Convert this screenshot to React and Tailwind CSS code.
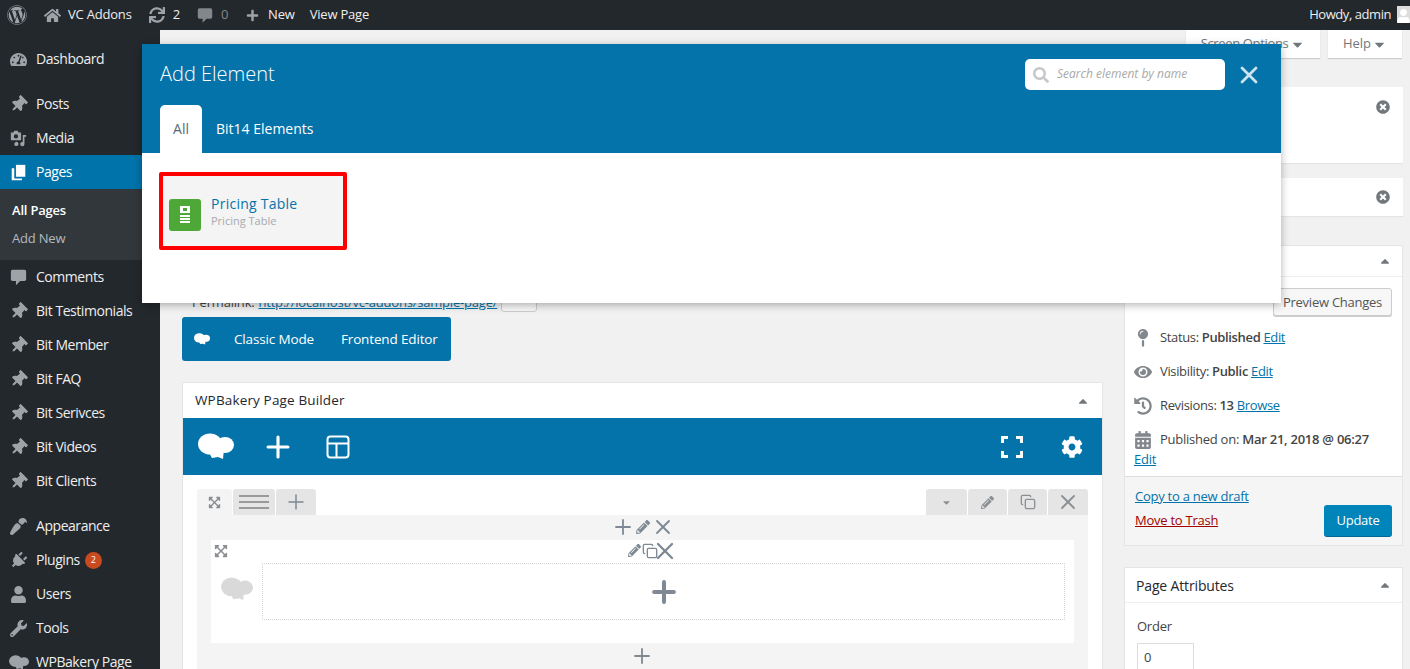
import React from "react";
import { FaWordpress, FaHome, FaSync, FaPlus, FaTachometerAlt, FaThumbtack, FaPaintBrush, FaPlug, FaUser, FaWrench, FaMapPin, FaEye, FaHistory, FaCalendarAlt, FaTimesCircle, FaExpandArrowsAlt, FaPencilAlt, FaCog, FaSearch, FaCaretDown, FaCaretUp } from "react-icons/fa";
import { Copy, X, Plus } from "lucide-react";

const Cloud = ({ className }) => (
  <svg viewBox="0 0 36 27" className={className} fill="currentColor">
    <ellipse cx="12" cy="11" rx="12" ry="10.500" />
    <ellipse cx="27" cy="12" rx="9" ry="8" />
    <path d="M10 18 L26 16 L25 26 L20 24 L14 25 Z" />
  </svg>
);

const Pages = ({ className }) => (
  <svg viewBox="0 0 20 20" className={className} fill="currentColor">
    <path d="M7 1h11v14H7z" />
    <path d="M2 5h3v12h9v2H2z" />
  </svg>
);

const Media = ({ className }) => (
  <svg viewBox="0 0 20 20" className={className} fill="currentColor">
    <path fillRule="evenodd" d="M1 3h3l1-2h4l1 2h3v9H1zM7 5a2.500 2.500 0 1 0 0 5 2.500 2.500 0 0 0 0-5z" />
    <path d="M15 6h4v2h-2v8.500a2.500 2.500 0 1 1-2-2.400z" />
    <path d="M7 14a2.500 2.500 0 1 1-2 2.400 2.500 2.500 0 0 1 2-2.400z" />
  </svg>
);

const Bubble = ({ className }) => (
  <svg viewBox="0 0 20 20" className={className} fill="currentColor">
    <path d="M3 1h14a2 2 0 0 1 2 2v9a2 2 0 0 1-2 2h-5l-5 5v-5H3a2 2 0 0 1-2-2V3a2 2 0 0 1 2-2z" />
  </svg>
);

const Focus = ({ className }) => (
  <svg viewBox="0 0 22 22" className={className} fill="none" stroke="currentColor" strokeWidth="3">
    <path d="M1.500 7V1.500H7M15 1.500h5.500V7M20.500 15v5.500H15M7 20.500H1.500V15" />
  </svg>
);

const Layout = ({ className }) => (
  <svg viewBox="0 0 24 24" className={className} fill="none" stroke="currentColor" strokeWidth="2">
    <rect x="1.500" y="1.500" width="21" height="21" rx="3" />
    <path d="M1.500 8.500h21M10.500 8.500v14" />
  </svg>
);

const Pin = ({ className }) => <FaThumbtack className={`${className} rotate-45`} />;
const Brush = ({ className }) => <FaPaintBrush className={`${className} rotate-180`} />;
const Plug = ({ className }) => <FaPlug className={`${className} rotate-45`} />;

function Item({ icon: Icon, label, active, badge, iconClass = "w-[17px] h-[17px]" }) {
  return (
    <div className={`flex h-[34px] items-center ${active ? "bg-[#0073aa] text-white" : "text-[#eeeeee]"}`}>
      <div className={`flex w-[36px] justify-center pl-[1px] ${active ? "text-white" : "text-[#9ea3a8]"}`}>
        <Icon className={iconClass} />
      </div>
      <span className="pb-[2px] text-[14px] tracking-[-0.45px] whitespace-nowrap">{label}</span>
      {badge && (
        <span className="ml-[5px] flex h-[17px] w-[17px] items-center justify-center rounded-full bg-[#ca4a1f] text-[9px] text-white">{badge}</span>
      )}
    </div>
  );
}

function Sidebar() {
  return (
    <aside className="h-[639px] w-[160px] shrink-0 overflow-hidden bg-[#23282d] pt-[12px]">
      <Item icon={FaTachometerAlt} label="Dashboard" />
      <div className="h-[11px]" />
      <Item icon={Pin} label="Posts" />
      <Item icon={Media} label="Media" />
      <Item icon={Pages} label="Pages" active />
      <div className="bg-[#32373c] pt-[8px] pb-[7px] text-[13px] tracking-[-0.2px]">
        <div className="flex h-[28px] items-center pl-[12px] font-semibold text-white">All Pages</div>
        <div className="flex h-[28px] items-center pl-[12px] text-[#b4b9be]">Add New</div>
      </div>
      <Item icon={Bubble} label="Comments" />
      <Item icon={Pin} label="Bit Testimonials" />
      <Item icon={Pin} label="Bit Member" />
      <Item icon={Pin} label="Bit FAQ" />
      <Item icon={Pin} label="Bit Serivces" />
      <Item icon={Pin} label="Bit Videos" />
      <Item icon={Pin} label="Bit Clients" />
      <div className="h-[11px]" />
      <Item icon={Brush} label="Appearance" />
      <Item icon={Plug} label="Plugins" badge="2" />
      <Item icon={FaUser} label="Users" />
      <Item icon={FaWrench} label="Tools" />
      <Item icon={Cloud} label="WPBakery Page" iconClass="w-[20px] h-[15px]" />
    </aside>
  );
}

function TopBar() {
  return (
    <header className="flex h-[30px] items-center bg-[#23282d] text-[13px] tracking-[-0.2px] text-[#eeeeee]">
      <FaWordpress className="ml-[7px] h-[20px] w-[20px] text-[#9ea3a8]" />
      <FaHome className="ml-[17px] h-[17px] w-[17px] text-[#9ea3a8]" />
      <span className="ml-[7px]">VC Addons</span>
      <FaSync className="ml-[16px] h-[16px] w-[18px] text-[#9ea3a8]" />
      <span className="ml-[7px]">2</span>
      <Bubble className="ml-[17px] h-[17px] w-[16px] text-[#82878c]" />
      <span className="ml-[8px] text-[#82878c]">0</span>
      <FaPlus className="ml-[18px] h-[13px] w-[13px] text-[#9ea3a8]" />
      <span className="ml-[9px]">New</span>
      <span className="ml-[15px]">View Page</span>
      <span className="ml-auto tracking-[-0.45px]">Howdy, admin</span>
      <div className="mb-[2px] ml-[6px] flex h-[17px] w-[13px] items-end justify-center overflow-hidden bg-[#dddddd]">
        <FaUser className="h-[14px] w-[14px] text-white" />
      </div>
    </header>
  );
}

function Modal() {
  return (
    <div className="absolute left-[142px] top-[44px] z-10 w-[1139px] bg-white shadow-[0_2px_8px_rgba(0,0,0,0.3)]">
      <div className="flex h-[109px] flex-col bg-[#0473aa]">
        <div className="flex h-[61px] items-center pl-[18px]">
          <h2 className="pb-[2px] text-[20px] font-light text-white">Add Element</h2>
          <div className="ml-auto flex h-[31px] w-[200px] items-center rounded-[5px] bg-white pl-[8px]">
            <FaSearch className="h-[16px] w-[16px] text-[#c8c8cc]" />
            <span className="ml-[8px] pb-[2px] text-[12px] italic text-[#a9a9a9]">Search element by name</span>
          </div>
          <X className="ml-[10px] mr-[18px] h-[28px] w-[28px] text-[#cfe3ee]" strokeWidth={2.400} />
        </div>
        <div className="flex flex-1 items-end pl-[18px]">
          <div className="flex h-[48px] w-[42px] items-center justify-center rounded-t-[5px] bg-white pb-[2px] text-[14px] text-[#5a6a75]">All</div>
          <div className="flex h-[48px] items-center pb-[2px] pl-[14px] text-[14px] text-white">Bit14 Elements</div>
        </div>
      </div>
      <div className="h-[150px] pl-[17px] pt-[19px]">
        <div className="flex h-[78px] w-[188px] items-center rounded-[2px] border-[4px] border-[#ff0000] bg-[#f4f4f4] pl-[6px]">
          <div className="mt-[8px] flex h-[32px] w-[32px] items-center justify-center rounded-[3px] bg-[#4ea838]">
            <svg viewBox="0 0 12 18" className="h-[20px] w-[12px]" fill="#fff">
              <path d="M1 0h10v7H1zM4 2v3h4V2zM1 9h10v2H1zM1 12h10v2H1zM1 15h10v2H1z" fillRule="evenodd" />
            </svg>
          </div>
          <div className="ml-[10px] flex flex-col">
            <span className="text-[14px] leading-[19px] font-medium tracking-[0.25px] text-[#0473aa]">Pricing Table</span>
            <span className="text-[11px] leading-[15px] text-[#a6aab0]">Pricing Table</span>
          </div>
        </div>
      </div>
    </div>
  );
}

const Tab = ({ children, className = "bg-[#e5e5e5]" }) => (
  <div className={`flex h-[26px] items-center justify-center rounded-t-[3px] text-[#7e8993] ${className}`}>{children}</div>
);

function Builder() {
  return (
    <section className="mt-[21px] h-[300px] w-[921px] overflow-hidden border border-[#e5e5e5] bg-white">
      <div className="flex h-[35px] items-center px-[12px] text-[13.500px] text-[#23282d]">
        <span className="tracking-[0.15px]">WPBakery Page Builder</span>
        <FaCaretUp className="ml-auto h-[14px] w-[14px] text-[#72777c]" />
      </div>
      <div className="flex h-[57px] items-center bg-[#0473aa] text-white">
        <Cloud className="ml-[15px] h-[27px] w-[36px]" />
        <Plus className="ml-[27px] h-[34px] w-[34px]" strokeWidth={2.200} />
        <Layout className="ml-[31px] h-[24px] w-[24px]" />
        <Focus className="ml-auto h-[22px] w-[22px]" />
        <FaCog className="ml-[38px] mr-[19px] h-[22px] w-[22px]" />
      </div>
      <div className="px-[14px] pt-[14px]">
        <div className="flex justify-between gap-[1px]">
          <div className="flex gap-[1px]">
            <Tab className="w-[35px] bg-[#f4f4f4]"><FaExpandArrowsAlt className="h-[13px] w-[13px] text-[#8b8f94]" /></Tab>
            <Tab className="w-[42px] bg-[#e5e5e5]">
              <div className="flex w-[30px] flex-col gap-[4px]">
                <div className="h-[2px] bg-[#9a9a9a]" />
                <div className="h-[2px] bg-[#9a9a9a]" />
                <div className="h-[2px] bg-[#9a9a9a]" />
              </div>
            </Tab>
            <Tab className="w-[40px] bg-[#e5e5e5]"><Plus className="h-[24px] w-[24px]" strokeWidth={1.500} /></Tab>
          </div>
          <div className="flex gap-[1px]">
            <Tab className="w-[41px] bg-[#e5e5e5]"><FaCaretDown className="h-[11px] w-[11px] text-[#8b8f94]" /></Tab>
            <Tab className="w-[39px] bg-[#e5e5e5]"><FaPencilAlt className="h-[13px] w-[13px] text-[#8b8f94]" /></Tab>
            <Tab className="w-[39px] bg-[#e5e5e5]"><Copy className="h-[16px] w-[16px] text-[#8b8f94]" strokeWidth={2} /></Tab>
            <Tab className="w-[40px] bg-[#e5e5e5]"><X className="h-[24px] w-[24px] text-[#8b8f94]" strokeWidth={1.800} /></Tab>
          </div>
        </div>
        <div className="bg-[#f4f4f4] px-[14px] pb-[20px]">
          <div className="flex h-[25px] items-center justify-center pb-[2px] text-[#7e8993]">
            <Plus className="h-[24px] w-[24px]" strokeWidth={1.800} />
            <FaPencilAlt className="ml-[1px] h-[14px] w-[14px]" />
            <X className="ml-[1px] h-[24px] w-[24px]" strokeWidth={1.800} />
          </div>
          <div className="h-[103px] bg-white pl-[4px] pr-[9px]">
            <div className="flex h-[21px] items-center text-[#7e8993]">
              <FaExpandArrowsAlt className="ml-[-1px] h-[14px] w-[14px] text-[#8b8f94]" />
              <div className="ml-[400px] flex items-center">
                <FaPencilAlt className="h-[13px] w-[13px]" />
                <Copy className="ml-[1px] h-[16px] w-[16px]" strokeWidth={2} />
                <X className="ml-[-7px] h-[28px] w-[28px]" strokeWidth={2} />
              </div>
            </div>
            <div className="mt-[2px] flex">
              <div className="flex w-[47px] justify-center pt-[11px]"><Cloud className="mr-[3px] h-[30px] w-[32px] text-[#d9d9d9]" /></div>
              <div className="flex h-[57px] flex-1 items-center justify-center border border-dotted border-[#d5d5d5]">
                <Plus className="h-[34px] w-[34px] text-[#7e8993]" strokeWidth={2.800} />
              </div>
            </div>
          </div>
          <div className="flex h-[26px] items-center justify-center pr-[1px] text-[#7e8993]">
            <Plus className="h-[24px] w-[24px]" strokeWidth={1.800} />
          </div>
        </div>
      </div>
    </section>
  );
}

const Link = ({ children, className = "text-[#0073aa]" }) => <a className={`underline ${className}`}>{children}</a>;

function MetaRow({ icon: Icon, children, className = "tracking-[-0.35px]" }) {
  return (
    <div className="flex h-[34px] items-center">
      <div className="flex w-[32px] justify-center pr-[3px] text-[#82878c]"><Icon className="h-[18px] w-[18px]" /></div>
      <div className={`whitespace-nowrap ${className}`}>{children}</div>
    </div>
  );
}

function RightColumn() {
  return (
    <div className="ml-[22px] w-[279px] shrink-0 text-[13px] tracking-[-0.25px] text-[#444444]">
      <div className="flex h-[28px] justify-end gap-[8px] pr-[1px]">
        <div className="flex w-[134px] items-center justify-center gap-[2px] bg-white tracking-[-0.35px] text-[#72777c] shadow-[0_1px_1px_rgba(0,0,0,0.15)]">
          Screen Options <FaCaretDown className="h-[15px] w-[15px]" />
        </div>
        <div className="flex w-[74px] items-center justify-center gap-[1px] bg-white tracking-[0px] text-[#72777c] shadow-[0_1px_1px_rgba(0,0,0,0.15)]">
          Help <FaCaretDown className="h-[15px] w-[15px]" />
        </div>
      </div>
      <div className="mt-[29px] flex h-[76px] justify-end bg-white pr-[13px] pt-[13px] shadow-[0_1px_1px_rgba(0,0,0,0.05)]">
        <FaTimesCircle className="h-[14px] w-[14px] text-[#72777c]" />
      </div>
      <div className="mt-[15px] flex h-[38px] justify-end bg-white pr-[13px] pt-[12px] shadow-[0_1px_1px_rgba(0,0,0,0.05)]">
        <FaTimesCircle className="h-[14px] w-[14px] text-[#72777c]" />
      </div>
      <div className="mt-[29px] border border-[#e5e5e5] bg-white">
        <div className="flex h-[31px] items-center justify-end border-b border-[#eeeeee] pr-[10px]">
          <FaCaretUp className="h-[14px] w-[14px] text-[#72777c]" />
        </div>
        <div className="flex justify-end pr-[10px] pt-[11px]">
          <div className="flex h-[28px] w-[119px] items-center justify-center rounded-[3px] border border-[#cccccc] bg-[#f7f7f7] pt-[1px] text-[#555555] shadow-[0_1px_0_#cccccc]">Preview Changes</div>
        </div>
        <div className="mt-[5px] pl-[3px]">
          <MetaRow icon={FaMapPin}>Status: <b className="font-semibold">Published</b> <Link>Edit</Link></MetaRow>
          <MetaRow icon={FaEye}>Visibility: <b className="font-semibold">Public</b> <Link>Edit</Link></MetaRow>
          <MetaRow icon={FaHistory}>Revisions: <b className="font-semibold">13</b> <Link>Browse</Link></MetaRow>
          <MetaRow icon={FaCalendarAlt} className="tracking-[-0.25px]">Published on: <b className="font-semibold">Mar 21, 2018 @ 06:27</b></MetaRow>
          <div className="-mt-[5px] flex h-[15px] items-center pl-[6px]"><Link>Edit</Link></div>
        </div>
        <div className="mt-[9px] flex h-[69px] items-start justify-between border-t border-[#dddddd] bg-[#f5f5f5] px-[10px] pt-[10px]">
          <div className="flex flex-col gap-[4px]">
            <Link>Copy to a new draft</Link>
            <Link className="text-[#a00000]">Move to Trash</Link>
          </div>
          <div className="mt-[18px] flex h-[31px] w-[68px] items-center justify-center rounded-[3px] bg-[#0085ba] text-white shadow-[0_1px_0_#006799]">Update</div>
        </div>
      </div>
      <div className="mt-[21px] h-[110px] border border-[#e5e5e5] bg-white">
        <div className="flex h-[35px] items-center justify-between border-b border-[#eeeeee] pl-[11px] pr-[10px] text-[14px] tracking-[-0.15px] text-[#23282d]">
          <span>Page Attributes</span>
          <FaCaretUp className="h-[14px] w-[14px] text-[#72777c]" />
        </div>
        <div className="pl-[12px] pt-[13px] leading-[20px]">Order</div>
        <div className="ml-[12px] mt-[7px] flex h-[30px] w-[57px] items-center border border-[#dddddd] pl-[6px]">0</div>
      </div>
    </div>
  );
}

export default function App() {
  return (
    <div className="relative h-[669px] w-[1410px] overflow-hidden bg-[#f1f1f1] font-['Open_Sans',sans-serif]">
      <TopBar />
      <div className="flex">
        <Sidebar />
        <main className="ml-[22px] flex">
          <div className="w-[920px] shrink-0 pt-[263px]">
            <div className="ml-[10px] flex h-[20px] items-center text-[13px] tracking-[-0.2px] text-[#444444]">
              <span>Permalink:</span>
              <Link className="ml-[4px] text-[#0073aa]">http://localhost/vc-addons/sample-page/</Link>
              <div className="-mt-[4px] ml-[4px] h-[22px] w-[36px] rounded-[3px] border border-[#cccccc] bg-[#f7f7f7]" />
            </div>
            <div className="mt-[4px] flex h-[44px] w-[269px] items-center rounded-[3px] bg-[#0473aa] text-[13.500px] tracking-[-0.15px] text-white">
              <Cloud className="ml-[12px] h-[12px] w-[16px]" />
              <span className="ml-[24px]">Classic Mode</span>
              <span className="ml-[27px]">Frontend Editor</span>
            </div>
            <Builder />
          </div>
          <RightColumn />
        </main>
      </div>
      <Modal />
    </div>
  );
}
